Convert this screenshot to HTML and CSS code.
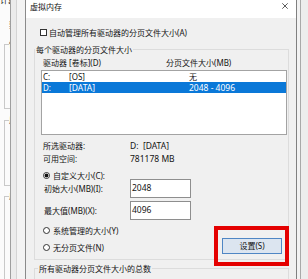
FILE: index.html
```html
<!DOCTYPE html>
<html lang="zh-CN">
<head>
<meta charset="utf-8">
<title>虚拟内存</title>
<link rel="stylesheet" href="styles.css">
</head>
<body>
<div class="screen">
  <div class="bgwin">
    <div class="bg-panel">
      <div class="bg-tabs">计算</div>
      <div class="bg-note">要</div>
      <fieldset class="bg-group g1"><legend>性</legend></fieldset>
      <fieldset class="bg-group g2"><legend>用</legend></fieldset>
      <fieldset class="bg-group g3"><legend>启</legend></fieldset>
    </div>
    <div class="bg-gap"></div>
    <div class="bg-gap2"></div>
  </div>

  <div class="dialog">
    <div class="titlebar">
      <span class="title">虚拟内存</span>
      <svg class="close" width="6" height="6" viewBox="0 0 6 6"><path d="M0.3 0.3L5.7 5.7M5.7 0.3L0.3 5.7" stroke="#333" stroke-width="0.8" fill="none"/></svg>
    </div>
    <div class="content">
      <div class="check-row"><span class="checkbox"></span><span>自动管理所有驱动器的分页文件大小(A)</span></div>

      <fieldset class="group">
        <legend>每个驱动器的分页文件大小</legend>
        <div class="group-body">
          <div class="list-head"><span>驱动器 [卷标](D)</span><span>分页文件大小(MB)</span></div>
          <div class="list">
            <div class="list-row"><span>C:</span><span>[OS]</span><span>无</span></div>
            <div class="list-row selected"><span>D:</span><span class="lat">[DATA]</span><span class="lat">2048 - 4096</span></div>
          </div>
          <div class="info">
            <div class="info-row"><span>所选驱动器:</span><span class="lat">D:&nbsp; [DATA]</span></div>
            <div class="info-row"><span>可用空间:</span><span class="lat">781178 MB</span></div>
          </div>
          <div class="radio-row first"><span class="radio checked"></span><span>自定义大小(C):</span></div>
          <div class="input-row r1"><span>初始大小(MB)(I):</span><span class="field lat">2048</span></div>
          <div class="input-row r2"><span>最大值(MB)(X):</span><span class="field lat">4096</span></div>
          <div class="lower">
            <div class="lower-left">
              <div class="radio-row"><span class="radio"></span><span>系统管理的大小(Y)</span></div>
              <div class="radio-row last"><span class="radio"></span><span>无分页文件(N)</span></div>
            </div>
            <div class="btn-wrap"><div class="button">设置(S)</div></div>
          </div>
        </div>
      </fieldset>

      <fieldset class="group total">
        <legend>所有驱动器分页文件大小的总数</legend>
        <div class="total-body"></div>
      </fieldset>
    </div>
  </div>

  <div class="rightwin">
    <div class="rw-a"></div>
    <div class="rw-line"></div>
    <div class="rw-b"></div>
  </div>
</div>
</body>
</html>
```

FILE: styles.css
```css
* { box-sizing: border-box; }
html, body { margin: 0; padding: 0; }
body {
  width: 308px;
  height: 279px;
  overflow: hidden;
  background: #f0f0f0;
  font-family: "Noto Sans", "Noto Sans CJK SC", sans-serif;
  font-size: 8px;
  line-height: 11px;
  color: #141414;
}
.lat { font-size: 8.5px; }

.screen { display: flex; height: 279px; overflow: hidden; }

/* background window on the left */
.bgwin { width: 25px; flex: none; display: flex; }
.bg-panel {
  width: 11px;
  background: #fbfbfb;
  border-right: 1px solid #9e9e9e;
  overflow: hidden;
  white-space: nowrap;
}
.bg-tabs { line-height: 10px; margin-top: -5px; }
.bg-note { line-height: 10px; margin-top: 15px; padding-left: 9px; }
.bg-group {
  width: 120px;
  margin: 0 0 0 4px;
  padding: 0;
  border: 1px solid #c9c9c9;
}
.bg-group legend { line-height: 10px; padding: 0; margin-left: 4px; color: #333; }
.g1 { margin-top: 9px; height: 70px; }
.g2 { margin-top: 6px; height: 71px; }
.g3 { margin-top: 5px; height: 90px; }
.bg-gap { width: 6px; background: #ebebeb; border-right: 1px solid #d4d4d4; }
.bg-gap2 { flex: 1; background: #f3f3f3; }

/* dialog */
.dialog {
  width: 272px;
  flex: none;
  display: flex;
  flex-direction: column;
  background: #f0f0f0;
  border-left: 1px solid #8a8a8a;
  border-right: 1px solid #808080;
}
.titlebar {
  height: 18px;
  flex: none;
  background: #fff;
  display: flex;
  align-items: flex-start;
  padding: 1px 8px 0 4px;
}
.title { line-height: 11px; color: #111; }
.close { margin-left: auto; margin-top: 2px; }

.content { padding-top: 8px; }

.check-row {
  display: flex;
  align-items: center;
  gap: 2px;
  height: 13px;
  padding-left: 14px;
}
.checkbox {
  width: 7px;
  height: 7px;
  border: 1px solid #333;
  background: #fff;
  flex: none;
}

.group {
  margin: 4px 7px 0 8px;
  padding: 0;
  border: 1px solid #dcdcdc;
  min-width: 0;
}
.group legend { padding: 0 1px; line-height: 13px; }
.group-body { padding: 0 1px 6px 6px; }

.list-head {
  display: grid;
  grid-template-columns: 123px 1fr;
  height: 13px;
  line-height: 13px;
  padding-left: 2px;
}
.list {
  margin-top: 1px;
  height: 65px;
  border: 1px solid #a3a3a3;
  background: #fff;
}
.list-row {
  display: grid;
  grid-template-columns: 26px 120px 1fr;
  height: 11px;
  line-height: 11px;
  padding-left: 1px;
}
.list-row.selected { background: #0a78d8; color: #fff; }

.info { margin-top: 4px; }
.info-row {
  display: grid;
  grid-template-columns: 87px 1fr;
  height: 13px;
  line-height: 13px;
  padding-left: 2px;
}

.radio-row {
  display: flex;
  align-items: center;
  gap: 3px;
  height: 12px;
  padding-left: 2px;
}
.radio-row.first { margin-top: 4px; }
.radio-row.last { margin-top: 5px; }
.radio {
  width: 7px;
  height: 7px;
  border: 1px solid #333;
  border-radius: 50%;
  background: #fff;
  flex: none;
}
.radio.checked { background: radial-gradient(circle, #111 0 1.7px, #fff 2.2px); }

.input-row {
  display: grid;
  grid-template-columns: 86px 61px;
  align-items: center;
  height: 19px;
  padding-left: 3px;
}
.input-row.r1 { margin-top: -2px; }
.input-row.r2 { margin-top: 3px; }
.field {
  height: 19px;
  border: 1px solid #8e8e8e;
  background: #fff;
  padding: 2px 0 0 1px;
  line-height: 11px;
}

.lower {
  display: flex;
  justify-content: space-between;
  margin-top: 4px;
}
.btn-wrap {
  position: relative;
  align-self: flex-end;
  margin: 0 5px -1px 0;
}
.button {
  width: 60px;
  height: 16px;
  border: 1px solid #4f86c4;
  background: #dce5f0;
  text-align: center;
  line-height: 14px;
  color: #111;
}
.btn-wrap::after {
  content: "";
  position: absolute;
  top: -12px;
  bottom: -12px;
  left: -8px;
  right: -7px;
  border: 4px solid #e40000;
}

.group.total { margin-top: 2px; }
.group.total legend { margin-left: 3px; }
.total-body { height: 20px; }

/* window on the right */
.rightwin { flex: 1; display: flex; }
.rw-a { width: 3px; background: #f2f2f2; }
.rw-line { width: 1px; background: #a9a9a9; }
.rw-b { flex: 1; background: #ededed; }
```
